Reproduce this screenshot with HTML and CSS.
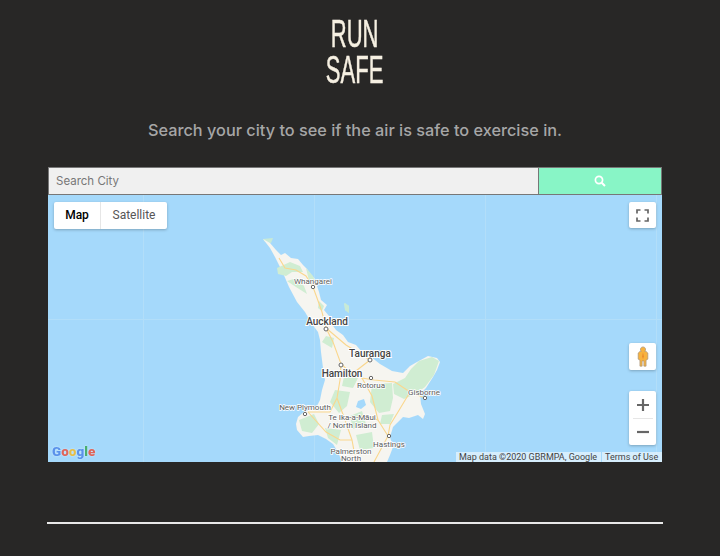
FILE: index.html
```html
<!DOCTYPE html>
<html lang="en">
<head>
<meta charset="utf-8">
<title>Run Safe</title>
<link rel="stylesheet" href="styles.css">
</head>
<body>
<main class="page">
  <h1 class="title"><span class="title-text">RUN<br>SAFE</span></h1>
  <p class="tagline">Search your city to see if the air is safe to exercise in.</p>
  <form class="search">
    <input class="search-input" type="text" placeholder="Search City">
    <button class="search-button" type="button" aria-label="Search">
      <svg width="12" height="12" viewBox="0 0 12 12"><circle cx="5" cy="5" r="3.6" fill="none" stroke="#fff" stroke-width="1.7"/><path d="M7.7 7.7 11 11" stroke="#fff" stroke-width="2"/></svg>
    </button>
  </form>
  <section class="map">
    <svg class="map-art" viewBox="48 195 614 267" width="614" height="267">
      <defs><filter id="soft" x="-5%" y="-5%" width="110%" height="110%"><feGaussianBlur stdDeviation="0.7"/></filter></defs>
      <g stroke="#b2def9" stroke-width="1"><path d="M143.5 195V462M314.5 195V462M485.5 195V462M656.5 195V462M48 319.5H662"/></g>
      <g filter="url(#soft)">
        <path fill="#c8ead6" d="M263 239 273 238 271 243 265 242Z"/>
        <path fill="#f6f5f0" d="M263 239 270 243 276 250 281 255 285 253 291 258 298 259 303 265 307 269 311 275 315 279 317 286 319 292 321 300 327 305 324 310 329 316 331 323 336 330 343 335 348 342 356 345 362 352 371 357 380 364 392 371 403 373 410 366 417 362 428 356 437 358 440 362 437 370 433 377 426 388 420 394 421 404 425 414 423 419 418 415 409 418 403 417 397 423 393 427 390 437 393 447 390 455 387 462 342 462 338 452 333 444 326 439 318 435 309 436 303 437 297 430 296 424 298 417 305 411 316 408 320 400 322 390 325 380 323 368 321 352 320 340 318 332 312 324 305 312 297 302 289 287 283 273 275 257 270 248Z"/>
        <path fill="#d0edd2" d="M277 268 290 262 300 266 303 272 292 272 286 276 278 274ZM287 281 297 278 304 286 307 294 296 287ZM306 268 313 276 316 284 309 281ZM319 301 324 306 322 311 318 308ZM326 336 334 338 332 348 322 342ZM344 303 349 306 349 313 345 310ZM405 378 411 369 419 361 432 357 439 361 434 375 425 387 415 394 404 399 394 394 393 384ZM372 384 392 383 393 398 390 411 379 413 370 402ZM345 372 358 378 353 388 342 386ZM335 390 350 392 347 406 339 413 330 402ZM299 420 314 414 319 424 312 433 302 431ZM350 416 362 411 366 424 353 429ZM325 428 341 430 337 445 328 438ZM382 415 394 414 390 424 380 424ZM356 435 372 432 374 448 360 450Z"/>
        <path fill="#c8ead6" d="M345 303 349 306 349 313 345 310Z"/>
        <path fill="#a5d9fb" d="M358 401 364 399 366 405 361 409 356 407Z"/>
        <g fill="none" stroke="#fad78d" stroke-width="1.100">
          <path d="M279 258 285 268 296 270 306 276 313 287 317 298 322 312 326 328 333 342 341 364 352 374 362 378 374 380 395 382 410 392 425 398"/>
          <path d="M341 364 340 380 337 398 330 412 308 412M337 398 345 420 352 440 356 462M362 378 372 396 378 420 388 436 374 462"/>
          <path d="M410 392 398 412 390 425 388 436M352 440 340 440 326 432 308 412M345 420 366 415 378 420M370 360 352 374M326 328 346 345 370 360"/>
        </g>
      </g>
      <g class="place-major">
        <text x="327" y="324.500" text-anchor="middle">Auckland</text>
        <text x="370" y="356.500" text-anchor="middle">Tauranga</text>
        <text x="342" y="376.500" text-anchor="middle">Hamilton</text>
      </g>
      <g class="place-minor">
        <text x="313" y="284" text-anchor="middle">Whangarei</text>
        <text x="371" y="388" text-anchor="middle">Rotorua</text>
        <text x="424" y="395" text-anchor="middle">Gisborne</text>
        <text x="305" y="410" text-anchor="middle">New Plymouth</text>
        <text text-anchor="middle"><tspan x="352" y="420">Te Ika-a-Māui</tspan><tspan x="352" y="428">/ North Island</tspan></text>
        <text x="389" y="447" text-anchor="middle">Hastings</text>
        <text text-anchor="middle"><tspan x="351" y="454">Palmerston</tspan><tspan x="351" y="461">North</tspan></text>
      </g>
      <g fill="#fff" stroke="#666" stroke-width="1">
        <circle cx="313" cy="287" r="1.700"/><circle cx="326" cy="329" r="2"/><circle cx="341" cy="365" r="2"/><circle cx="370" cy="360" r="2"/><circle cx="371" cy="378" r="1.700"/><circle cx="425" cy="398" r="1.700"/><circle cx="305" cy="414" r="1.700"/><circle cx="389" cy="436" r="1.700"/>
      </g>
    </svg>

    <div class="map-type">
      <span class="map-type-on">Map</span>
      <span class="map-type-off">Satellite</span>
    </div>
    <div class="ctrl ctrl-full">
      <svg width="13" height="13" viewBox="0 0 13 13" fill="none" stroke="#666" stroke-width="1.700"><path d="M1 4.500V1H4.500M8.500 1H12V4.500M12 8.500V12H8.500M4.500 12H1V8.500"/></svg>
    </div>
    <div class="ctrl ctrl-peg">
      <svg width="12" height="21" viewBox="0 0 12 24"><path fill="#f7b23f" stroke="#a8937a" stroke-width=".8" d="M6 1a3 3 0 0 1 2 5.200H9.500L11.500 8V15L9.500 16V23H7V17H5V23H2.500V16L.5 15V8L2.500 6.200H4A3 3 0 0 1 6 1Z"/><path d="M6 7 7 12 6 15 5 12Z" fill="#ea8a2c"/></svg>
    </div>
    <div class="ctrl ctrl-zoom">
      <svg class="zoom-glyph" width="12" height="12" viewBox="0 0 12 12"><path d="M0 6H12M6 0V12" stroke="#666" stroke-width="2.200"/></svg>
      <i class="zoom-rule"></i>
      <svg class="zoom-glyph" width="12" height="12" viewBox="0 0 12 12"><path d="M0 6H12" stroke="#666" stroke-width="2.200"/></svg>
    </div>
    <div class="google"><b class="g-b">G</b><b class="g-r">o</b><b class="g-y">o</b><b class="g-b">g</b><b class="g-g">l</b><b class="g-r">e</b></div>
    <div class="attribution"><span>Map data ©2020 GBRMPA, Google</span><span>Terms of Use</span></div>
  </section>
  <hr class="rule">
</main>
</body>
</html>
```

FILE: styles.css
```css
* { box-sizing: border-box; }
html, body { margin: 0; height: 100%; }
body { background: #282726; overflow: hidden; }
.page { width: 614px; margin-left: 48px; }
.title {
  margin: 0;
  padding-top: 16px;
  text-align: center;
  font: 400 38px/36px "Liberation Sans Narrow", "Liberation Sans", sans-serif;
  color: #f6f0e2;
  -webkit-text-stroke: .5px #f6f0e2;
}
.title-text { display: inline-block; vertical-align: top; transform: scaleX(.58); }
.tagline {
  margin: 31px 0 0;
  height: 22px;
  text-align: center;
  font: 500 16.300px/22px Inter, sans-serif;
  color: #a6a6a6;
}
.search { display: flex; height: 28px; margin-top: 26px; }
.search-input {
  flex: 1;
  min-width: 0;
  padding: 0 7px;
  border: 1px solid #777;
  border-right: 0;
  border-radius: 0;
  outline: 0;
  background: #f0f0f0;
  font: 400 11.500px Inter, sans-serif;
}
.search-input::placeholder { color: #777; opacity: 1; }
.search-button {
  width: 124px;
  padding: 0;
  border: 1px solid #777;
  border-radius: 0;
  background: #88f5c6;
  display: flex;
  align-items: center;
  justify-content: center;
}
.map { position: relative; height: 267px; background: #a5d9fb; overflow: hidden; }
.map-art { display: block; }
.place-major text { font: 500 10px Roboto, sans-serif; fill: #444; stroke: #fff; stroke-width: 2px; paint-order: stroke; }
.place-minor text { font: 400 8px Roboto, sans-serif; fill: #5c5c5c; stroke: #fff; stroke-width: 1.500px; paint-order: stroke; }
.map-type {
  position: absolute;
  left: 6px;
  top: 7px;
  height: 27px;
  width: 113px;
  display: flex;
  background: #fff;
  border-radius: 2px;
  box-shadow: 0 1px 3px rgba(0,0,0,.25);
  font: 400 12px/27px Roboto, sans-serif;
}
.map-type-on { width: 47px; text-align: center; color: #000; font-weight: 500; border-right: 1px solid #e6e6e6; }
.map-type-off { flex: 1; text-align: center; color: #565656; }
.ctrl {
  position: absolute;
  left: 581px;
  width: 27px;
  background: #fff;
  border-radius: 2px;
  box-shadow: 0 1px 3px rgba(0,0,0,.25);
  display: flex;
  flex-direction: column;
  align-items: center;
  justify-content: center;
}
.ctrl-full { top: 7px; height: 26px; }
.ctrl-peg { top: 148px; height: 27px; }
.ctrl-zoom { top: 196px; height: 54px; }
.zoom-glyph { margin: 7px 0; }
.zoom-rule { display: block; width: 20px; height: 1px; background: #e6e6e6; }
.google {
  position: absolute;
  left: 4px;
  bottom: 1px;
  font: 700 13.500px/19px Roboto, sans-serif;
  opacity: .85;
  text-shadow: 0 0 2px rgba(255,255,255,.7);
}
.g-b { color: #4d86e8; }
.g-r { color: #e8513f; }
.g-y { color: #f2b92b; }
.g-g { color: #3aa757; }
.attribution {
  position: absolute;
  right: 0;
  bottom: 0;
  height: 10px;
  width: 206px;
  display: flex;
  font: 400 9px/11px Roboto, sans-serif;
  color: #444;
}
.attribution span { background: rgba(255,255,255,.55); padding: 0 3px; white-space: nowrap; }
.attribution span:first-child { width: 145px; margin-right: 1px; }
.attribution span:last-child { flex: 1; }
.rule {
  margin: 60px 0 0 -1px;
  width: 616px;
  height: 2px;
  border: 0;
  background: #e8e8e8;
}
```
